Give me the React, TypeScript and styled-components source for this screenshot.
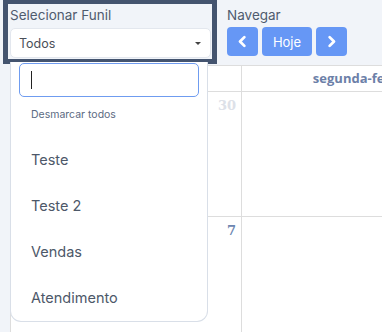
import React from "react";
import styled, { createGlobalStyle } from "styled-components";

const GlobalStyle = createGlobalStyle`
  html, body {
    margin: 0;
    padding: 0;
    background: #f1f4f9;
    font-family: "Inter", "Open Sans", sans-serif;
    overflow: hidden;
  }
`;

const funnels = ["Teste", "Teste 2", "Vendas", "Atendimento"];

const App = () => {
  return (
    <>
      <GlobalStyle />
      <Page>
        <Toolbar>
          <FunnelBox>
            <Label>Selecionar Funil</Label>
            <Select>
              <span>Todos</span>
              <Caret />
            </Select>
            <Menu>
              <Search>
                <Cursor />
              </Search>
              <ClearAll>Desmarcar todos</ClearAll>
              <OptionList>
                {funnels.map((f) => (
                  <Option key={f}>{f}</Option>
                ))}
              </OptionList>
            </Menu>
          </FunnelBox>

          <NavGroup>
            <Label>Navegar</Label>
            <Buttons>
              <NavButton $square>
                <Chevron viewBox="0 0 12 12">
                  <path d="M7.5 2.5 L4 6 L7.5 9.5" />
                </Chevron>
              </NavButton>
              <NavButton>Hoje</NavButton>
              <NavButton $square>
                <Chevron viewBox="0 0 12 12">
                  <path d="M4.5 2.5 L8 6 L4.5 9.5" />
                </Chevron>
              </NavButton>
            </Buttons>
          </NavGroup>
        </Toolbar>

        <Calendar>
          <HeaderRow>
            <HeadCell>domingo</HeadCell>
            <HeadCell>segunda-feira</HeadCell>
          </HeaderRow>
          <WeekRow>
            <DayCell>
              <DayNum $other>30</DayNum>
            </DayCell>
            <DayCell />
          </WeekRow>
          <WeekRow>
            <DayCell>
              <DayNum>7</DayNum>
            </DayCell>
            <DayCell />
          </WeekRow>
        </Calendar>
      </Page>
    </>
  );
};

const Page = styled.div`
  width: 382px;
  height: 332px;
  overflow: hidden;
`;

const Toolbar = styled.div`
  display: flex;
  align-items: flex-start;
  height: 65px;
`;

const FunnelBox = styled.div`
  position: relative;
  margin-left: 3px;
  width: 201px;
  height: 55px;
  padding: 0 1px 0 2px;
  border: 5px solid #44546f;
  border-top-width: 4px;
  display: flex;
  flex-direction: column;
  z-index: 2;
`;

const Label = styled.div`
  font-size: 13.5px;
  line-height: 17px;
  color: #4f5b6e;
  margin-top: 3px;
  height: 21px;
`;

const Select = styled.div`
  height: 30px;
  box-sizing: border-box;
  background: #fff;
  border: 1px solid #e3e7ee;
  border-radius: 5px;
  display: flex;
  align-items: center;
  justify-content: space-between;
  padding: 0 9px 0 8px;
  font-size: 12.5px;
  color: #4a4f58;
`;

const Caret = styled.span`
  width: 0;
  height: 0;
  border-left: 3px solid transparent;
  border-right: 3px solid transparent;
  border-top: 3px solid #444;
`;

const Menu = styled.div`
  position: absolute;
  left: 2px;
  top: 58px;
  width: 198px;
  height: 260px;
  box-sizing: border-box;
  background: #fff;
  border: 1px solid #d9dfe8;
  border-top: none;
  border-radius: 0 0 11px 11px;
  padding: 1px 8px 0 8px;
  display: flex;
  flex-direction: column;
`;

const Search = styled.div`
  height: 35px;
  box-sizing: border-box;
  border: 1px solid #6f9cf0;
  border-radius: 5px;
  display: flex;
  align-items: center;
  padding-left: 11px;
`;

const Cursor = styled.span`
  width: 1px;
  height: 18px;
  background: #222;
`;

const ClearAll = styled.div`
  font-size: 10.5px;
  color: #5b6a82;
  padding-left: 12px;
  margin-top: 11px;
  height: 14px;
  line-height: 14px;
`;

const OptionList = styled.div`
  margin-top: 15px;
  display: flex;
  flex-direction: column;
`;

const Option = styled.div`
  font-size: 14.5px;
  color: #4d5869;
  padding-left: 12px;
  height: 46px;
  line-height: 46px;
`;

const NavGroup = styled.div`
  margin-left: 10px;
  display: flex;
  flex-direction: column;
  padding-top: 4px;
`;

const Buttons = styled.div`
  display: flex;
  gap: 4px;
  margin-top: -1px;
`;

const NavButton = styled.button<{ $square?: boolean }>`
  height: 29px;
  width: ${({ $square }) => ($square ? "31px" : "50px")};
  border: none;
  border-radius: 4px;
  background: #6697f5;
  color: #fff;
  font-family: "Inter", "Open Sans", sans-serif;
  font-size: 13px;
  display: flex;
  align-items: center;
  justify-content: center;
  padding: 0;
`;

const Chevron = styled.svg`
  width: 15px;
  height: 15px;
  fill: none;
  stroke: #fff;
  stroke-width: 2.2;
  stroke-linecap: round;
  stroke-linejoin: round;
`;

const Calendar = styled.div`
  margin-left: 10px;
  width: 480px;
  background: #fff;
  border-top: 1px solid #dddddd;
  border-left: 1px solid #dddddd;
`;

const HeaderRow = styled.div`
  display: grid;
  grid-template-columns: 231px 232px;
  height: 25px;
  border-bottom: 1px solid #dddddd;
`;

const HeadCell = styled.div`
  border-right: 1px solid #dddddd;
  text-align: center;
  font-family: "Open Sans", sans-serif;
  font-weight: 700;
  font-size: 13px;
  line-height: 25px;
  color: #6c80a8;
`;

const WeekRow = styled.div`
  display: grid;
  grid-template-columns: 231px 232px;
  height: 124px;
  border-bottom: 1px solid #dddddd;
`;

const DayCell = styled.div`
  border-right: 1px solid #dddddd;
  display: flex;
  justify-content: flex-end;
  align-items: flex-start;
`;

const DayNum = styled.span<{ $other?: boolean }>`
  font-family: "DejaVu Serif", serif;
  font-weight: 700;
  font-size: 13px;
  padding: 6px 5px 0 0;
  color: ${({ $other }) => ($other ? "#dde1e8" : "#6c86b0")};
`;

export default App;
